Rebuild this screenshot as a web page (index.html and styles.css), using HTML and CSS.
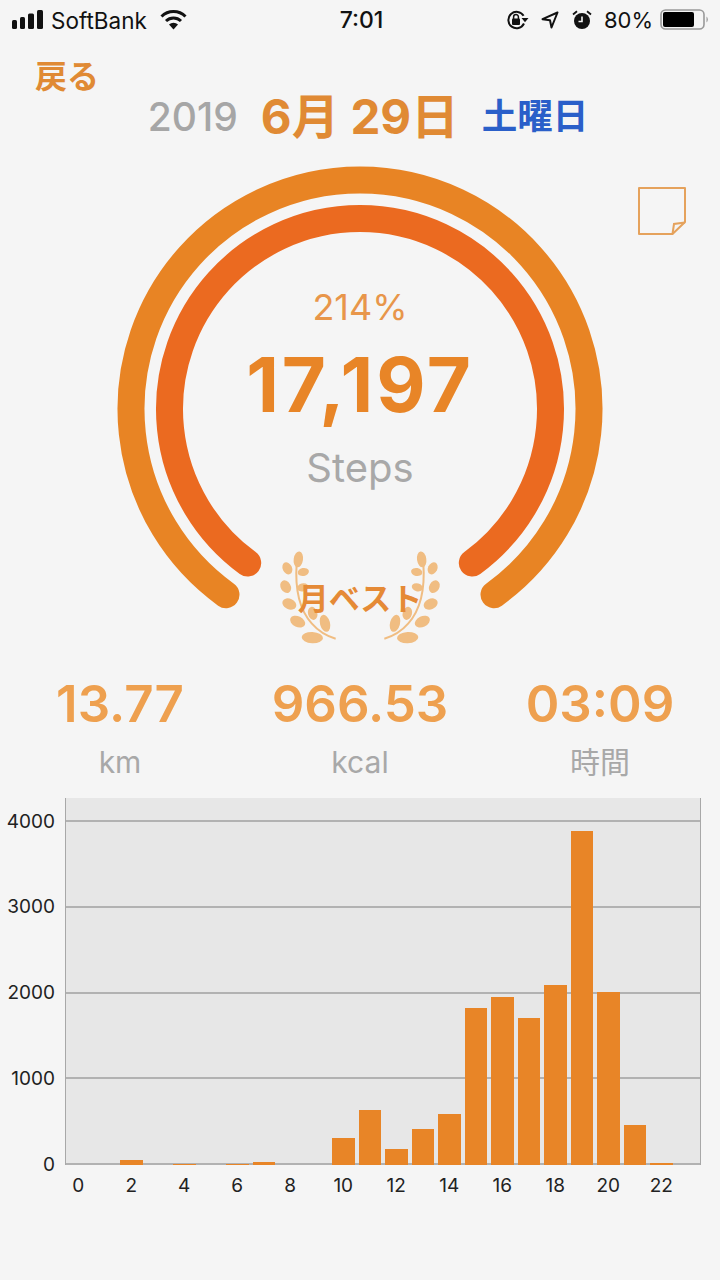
FILE: index.html
```html
<!DOCTYPE html>
<html lang="ja">
<head>
  <meta charset="UTF-8">
  <meta name="viewport" content="width=device-width, initial-scale=1.0">
  <title>Steps</title>
  <link rel="stylesheet" href="styles.css">
</head>
<body>
  <div class="status-bar">
    <div class="status-left">
      <svg class="signal" width="32" height="20" viewBox="0 0 32 20">
        <rect x="0" y="10" width="5" height="9" rx="1.5"/>
        <rect x="8" y="7" width="5" height="12" rx="1.5"/>
        <rect x="16" y="3.5" width="6" height="15.5" rx="1.5"/>
        <rect x="25" y="0" width="6" height="19" rx="1.5"/>
      </svg>
      <span class="carrier">SoftBank</span>
      <svg class="wifi" width="27" height="20" viewBox="0 0 27 20">
        <path d="M1.5 6.5 A17 17 0 0 1 25.5 6.5" fill="none" stroke="#111" stroke-width="3"/>
        <path d="M6 11 A11 11 0 0 1 21 11" fill="none" stroke="#111" stroke-width="3"/>
        <path d="M9 14.6 A6.6 6.6 0 0 1 18 14.6 L13.5 19.5 Z" fill="#111"/>
      </svg>
    </div>
    <div class="status-time">7:01</div>
    <div class="status-right">
      <svg width="23" height="20" viewBox="0 0 23 20">
        <path d="M18 13.5 A8.2 8.2 0 1 1 17.6 5.8" fill="none" stroke="#111" stroke-width="2"/>
        <path d="M15.5 8 H22.5 L19 12.2 Z" fill="#111"/>
        <rect x="6" y="8.5" width="8" height="6.5" rx="1" fill="#111"/>
        <path d="M7.6 9 V7 A2.4 2.4 0 0 1 12.4 7 V9" fill="none" stroke="#111" stroke-width="1.5"/>
      </svg>
      <svg class="arrow" width="18" height="18" viewBox="0 0 18 18">
        <path d="M16.5 1.5 L1.5 8.2 L9 9.2 L10.5 16.5 Z" fill="none" stroke="#111" stroke-width="2" stroke-linejoin="round"/>
      </svg>
      <svg class="alarm" width="20" height="20" viewBox="0 0 20 20">
        <circle cx="10" cy="11" r="8" fill="#111"/>
        <path d="M10 6.5 V11.5 H6.5" fill="none" stroke="#f5f5f5" stroke-width="1.6"/>
        <path d="M1 4.5 L5 1.2 M19 4.5 L15 1.2" stroke="#111" stroke-width="1.8"/>
      </svg>
      <span class="battery-text">80%</span>
      <svg width="49" height="22" viewBox="0 0 49 22">
        <rect x="1" y="1" width="43" height="19" rx="4.5" fill="none" stroke="#999" stroke-width="1.6"/>
        <rect x="3" y="3" width="31" height="15" rx="2" fill="#000"/>
        <path d="M46.5 7.5 A4 4 0 0 1 46.5 13.5 Z" fill="#999"/>
      </svg>
    </div>
  </div>

  <a class="back" href="#">戻る</a>

  <div class="date-row">
    <span class="date-year">2019</span>
    <span class="date-day">6月 29日</span>
    <span class="date-week">土曜日</span>
  </div>

  <div class="gauge">
    <svg class="gauge-rings" width="720" height="490" viewBox="0 160 720 490">
      <path class="ring-outer" d="M226 594.7 A229 229 0 1 1 494 594.7"/>
      <path class="ring-inner" d="M247.7 563 A190.5 190.5 0 1 1 472.3 563"/>
    </svg>
    <div class="gauge-text">
      <div class="percent">214%</div>
      <div class="steps">17,197</div>
      <div class="steps-label">Steps</div>
    </div>
    <div class="medal">
      <svg class="laurel" width="320" height="130" viewBox="0 0 960 390">
        <g id="branch">
          <path d="M290 100 C285 170 295 235 335 280 C355 303 380 318 407 326" fill="none" stroke="#f0bd82" stroke-width="6"/>
          <ellipse cx="295" cy="88" rx="14" ry="24" transform="rotate(8 295 88)"/>
          <ellipse cx="262" cy="115" rx="14" ry="19" transform="rotate(-25 262 115)"/>
          <ellipse cx="310" cy="126" rx="17" ry="12" transform="rotate(-12 310 126)"/>
          <ellipse cx="257" cy="170" rx="15" ry="20" transform="rotate(-30 257 170)"/>
          <ellipse cx="308" cy="172" rx="17" ry="12" transform="rotate(-15 308 172)"/>
          <ellipse cx="268" cy="222" rx="22" ry="16" transform="rotate(25 268 222)"/>
          <ellipse cx="338" cy="250" rx="14" ry="20" transform="rotate(-15 338 250)"/>
          <ellipse cx="293" cy="275" rx="24" ry="16" transform="rotate(25 293 275)"/>
          <ellipse cx="375" cy="280" rx="15" ry="26" transform="rotate(-15 375 280)"/>
          <ellipse cx="337" cy="323" rx="32" ry="17" transform="rotate(3 337 323)"/>
        </g>
        <use href="#branch" transform="matrix(-1 0 0 1 960 0)"/>
      </svg>
      <div class="medal-text">月ベスト</div>
    </div>
    <svg class="note" width="48" height="48" viewBox="0 0 48 48">
      <path d="M1 1 H47 V35 L34.5 47 H1 Z" fill="none" stroke="#e5a25c" stroke-width="2" stroke-linejoin="round"/>
      <path d="M47 35.5 L36 37 L34.5 47" fill="none" stroke="#e5a25c" stroke-width="2"/>
    </svg>
  </div>

  <div class="stats">
    <div class="stat">
      <div class="stat-value">13.77</div>
      <div class="stat-label">km</div>
    </div>
    <div class="stat">
      <div class="stat-value">966.53</div>
      <div class="stat-label">kcal</div>
    </div>
    <div class="stat">
      <div class="stat-value">03:09</div>
      <div class="stat-label">時間</div>
    </div>
  </div>

  <div class="chart">
    <div class="y-axis">
      <span>4000</span>
      <span>3000</span>
      <span>2000</span>
      <span>1000</span>
      <span>0</span>
    </div>
    <div class="plot">
      <div class="bar" style="height:0"></div>
      <div class="bar" style="height:0"></div>
      <div class="bar" style="height:4.5px"></div>
      <div class="bar" style="height:0"></div>
      <div class="bar" style="height:1px"></div>
      <div class="bar" style="height:0"></div>
      <div class="bar" style="height:1px"></div>
      <div class="bar" style="height:2.5px"></div>
      <div class="bar" style="height:0"></div>
      <div class="bar" style="height:0"></div>
      <div class="bar" style="height:26.5px"></div>
      <div class="bar" style="height:55px"></div>
      <div class="bar" style="height:16px"></div>
      <div class="bar" style="height:36px"></div>
      <div class="bar" style="height:51px"></div>
      <div class="bar" style="height:156.5px"></div>
      <div class="bar" style="height:167.5px"></div>
      <div class="bar" style="height:146.5px"></div>
      <div class="bar" style="height:180px"></div>
      <div class="bar" style="height:334px"></div>
      <div class="bar" style="height:173px"></div>
      <div class="bar" style="height:39.5px"></div>
      <div class="bar" style="height:2px"></div>
      <div class="bar" style="height:0"></div>
    </div>
    <div class="x-axis">
      <span>0</span>
      <span>2</span>
      <span>4</span>
      <span>6</span>
      <span>8</span>
      <span>10</span>
      <span>12</span>
      <span>14</span>
      <span>16</span>
      <span>18</span>
      <span>20</span>
      <span>22</span>
    </div>
  </div>
</body>
</html>
```

FILE: styles.css
```css
body {
  font-family: Inter, "Noto Sans CJK JP", sans-serif;
  background: #f5f5f5;
  color: #111;
  margin: 0;
  width: 720px;
  height: 1280px;
  overflow: hidden;
}
.status-bar {
  display: grid;
  grid-template-columns: 1fr auto 1fr;
  align-items: center;
  height: 40px;
  font-size: 22px;
}
.status-left {
  display: flex;
  align-items: center;
  padding-left: 12px;
}
.signal {
  fill: #111;
}
.carrier {
  margin-left: 7px;
  font-size: 22.5px;
}
.wifi {
  margin-left: 13px;
}
.status-time {
  font-size: 23px;
  font-weight: 500;
  padding-left: 3px;
}
.status-right {
  display: flex;
  align-items: center;
  justify-content: flex-end;
  padding-right: 11px;
}
.arrow {
  margin-left: 12px;
}
.alarm {
  margin-left: 13px;
}
.battery-text {
  margin-left: 12px;
  margin-right: 7px;
}
.back {
  display: block;
  margin: 22px 0 0 35px;
  height: 30px;
  line-height: 30px;
  font-size: 32px;
  font-weight: 700;
  color: #e08a34;
  text-decoration: none;
}
.date-row {
  display: flex;
  justify-content: center;
  align-items: center;
  height: 50px;
  padding-left: 16px;
}
.date-year {
  font-size: 39px;
  line-height: 50px;
  font-weight: 500;
  color: #a6a6a6;
}
.date-day {
  margin-left: 23px;
  font-size: 47.5px;
  line-height: 50px;
  font-weight: 700;
  color: #e08a34;
}
.date-week {
  margin-left: 23px;
  font-size: 35.5px;
  line-height: 50px;
  font-weight: 700;
  color: #2a5fc9;
}
.gauge {
  position: relative;
  display: grid;
  margin-top: 18px;
  height: 490px;
}
.gauge > .gauge-rings,
.gauge > .gauge-text,
.gauge > .medal {
  grid-area: 1 / 1;
}
.gauge-rings {
  fill: none;
  stroke-linecap: round;
  stroke-width: 27px;
}
.ring-outer {
  stroke: #e88424;
}
.ring-inner {
  stroke: #eb6a20;
}
.gauge-text {
  display: flex;
  flex-direction: column;
  align-items: center;
  padding-top: 126px;
}
.percent {
  font-size: 36px;
  line-height: 42px;
  color: #e8964a;
}
.steps {
  font-size: 76px;
  line-height: 92px;
  font-weight: 700;
  letter-spacing: 2.8px;
  color: #e88527;
  margin-top: 10px;
}
.steps-label {
  font-size: 40px;
  line-height: 50px;
  color: #a8a8a8;
  margin-top: 13px;
}
.medal {
  display: grid;
  align-self: end;
  justify-self: center;
  align-items: center;
  justify-items: center;
  margin-bottom: -10px;
}
.laurel {
  grid-area: 1 / 1;
  fill: #f0bd82;
}
.medal-text {
  grid-area: 1 / 1;
  font-size: 31px;
  font-weight: 600;
  color: #e58a36;
  padding-top: 2px;
}
.note {
  position: absolute;
  left: 638px;
  top: 27px;
}
.stats {
  display: grid;
  grid-template-columns: repeat(3, 1fr);
  margin-top: 24px;
  text-align: center;
}
.stat-value {
  font-size: 51px;
  line-height: 60px;
  font-weight: 600;
  color: #eea04f;
}
.stat-label {
  margin-top: 8px;
  font-size: 30px;
  line-height: 40px;
  color: #a8a8a8;
}
.chart {
  display: grid;
  grid-template-columns: 65px 636px;
  grid-template-rows: 366.5px auto;
  margin-top: 16px;
}
.y-axis {
  display: flex;
  flex-direction: column;
  justify-content: space-between;
  align-items: flex-end;
  padding: 23.5px 10px 0 0;
  box-sizing: border-box;
  font-size: 19px;
  color: #222;
}
.y-axis span {
  height: 0;
  line-height: 0;
}
.plot {
  display: grid;
  grid-template-columns: repeat(24, 1fr);
  align-items: end;
  background-color: #e7e7e7;
  background-image: repeating-linear-gradient(to top, #b2b2b2 0, #b2b2b2 2px, transparent 2px, transparent 85.7px);
  box-shadow: inset 1px 0 #a8a8a8, inset -1px 0 #a8a8a8;
}
.bar {
  margin: 0 2px;
  background: #e88527;
}
.x-axis {
  grid-column: 2;
  display: grid;
  grid-template-columns: repeat(12, 53px);
  font-size: 19px;
  line-height: 24px;
  color: #222;
  padding-top: 9px;
}
.x-axis span {
  width: 26.5px;
  text-align: center;
}
```
